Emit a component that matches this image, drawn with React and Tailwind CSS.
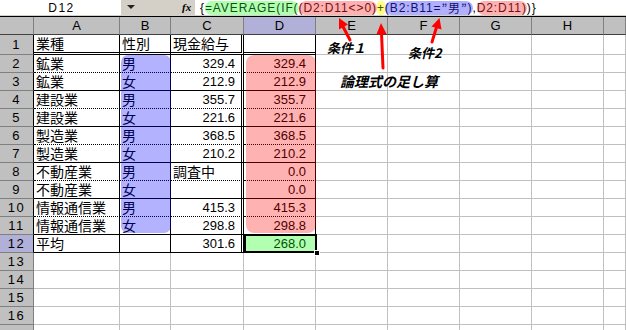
import React from "react";

const COLS = ["A", "B", "C", "D", "E", "F", "G", "H", ""];

// 表のデータ (A〜D列, 1〜12行)
const TABLE = [
  ["業種", "性別", "現金給与", ""],
  ["鉱業", "男", "329.4", "329.4"],
  ["鉱業", "女", "212.9", "212.9"],
  ["建設業", "男", "355.7", "355.7"],
  ["建設業", "女", "221.6", "221.6"],
  ["製造業", "男", "368.5", "368.5"],
  ["製造業", "女", "210.2", "210.2"],
  ["不動産業", "男", "調査中", "0.0"],
  ["不動産業", "女", "", "0.0"],
  ["情報通信業", "男", "415.3", "415.3"],
  ["情報通信業", "女", "298.8", "298.8"],
  ["平均", "", "301.6", "268.0"],
];

const isNum = (v) => /^[0-9.]+$/.test(v);

function rightBorder(r, c) {
  if (r > 12 || c > 3) return "border-r border-r-[#c0c0c0]";
  if (c === 2) return "border-r-[3px] border-r-black [border-right-style:double]";
  return "border-r border-r-black";
}

function bottomBorder(r, c) {
  if (r > 12 || c > 3) return "border-b border-b-[#c0c0c0]";
  if (r === 1) return "border-b-[3px] border-b-black [border-bottom-style:double]";
  if (r === 12) return "border-b border-b-black";
  if (r % 2 === 0) return "border-b border-b-black [border-bottom-style:dotted]";
  return "border-b border-b-black";
}

function Cell({ r, c }) {
  const v = r <= 12 && c <= 3 ? TABLE[r - 1][c] : "";
  const num = isNum(v);
  const pad = c === 3 ? "pr-[9px]" : "pr-[6px]";
  return (
    <div
      className={`flex items-center overflow-hidden whitespace-nowrap ${rightBorder(r, c)} ${bottomBorder(r, c)} ${
        num ? `justify-end text-[13px] ${pad}` : "justify-start pl-[2px] text-[14px]"
      }`}
    >
      {v}
    </div>
  );
}

function FormulaBar() {
  return (
    <div className="flex h-[15px] text-black">
      <div className="w-[121px] bg-white flex items-center justify-center text-[12px] tracking-[1.5px] pl-[2px]">
        D12
      </div>
      <div className="w-[74px] bg-[#d4d0c8] flex items-center relative">
        <svg width="8" height="5" viewBox="0 0 8 5" className="ml-[6px]">
          <polygon points="0,0 8,0 4,4" fill="#222" />
        </svg>
        <span className="absolute left-[61px] top-[0px] text-[11px] italic font-bold font-['Liberation_Serif',serif] leading-[14px]">
          fx
        </span>
      </div>
      <div className="flex-1 bg-white flex items-center pl-[5px] text-[12px] tracking-[0.9px] leading-[14px] whitespace-nowrap overflow-hidden">
        <span>{"{"}</span>
        <span className="rounded-full bg-[#b0ffb0] text-[#105010]">=AVERAGE(IF(</span>
        <span className="rounded-full bg-[#ffb0b0] text-[#701010]">(D2:D11&lt;&gt;0)</span>
        <span className="rounded-full bg-[#ffff80] text-[#505000]">+</span>
        <span className="rounded-full bg-[#b0b0ff] text-[#101070] flex items-center">
          (B2:B11=<span className="font-['Noto_Sans_CJK_JP',sans-serif] leading-[13px] text-[12px]">”男”</span>)
        </span>
        <span>,</span>
        <span className="rounded-full bg-[#ffb0b0] text-[#701010]">D2:D11)</span>
        <span>{")}"}</span>
      </div>
    </div>
  );
}

export default function App() {
  const rows = Array.from({ length: 17 }, (_, i) => i + 1);

  return (
    <div className="relative w-[626px] h-[330px] overflow-hidden bg-white font-['Liberation_Sans','Noto_Sans_CJK_JP',sans-serif] text-black">
      <FormulaBar />
      <div className="h-[1px] bg-[#d4d0c8]" />
      <div className="h-[1px] bg-black" />

      {/* Sheet grid */}
      <div className="grid grid-cols-[34px_86px_51px_73px_72px_72px_72px_72px_72px_1fr] grid-rows-[18px_20px_repeat(16,18px)] leading-none">
        {/* column headers */}
        <div className="bg-[#c0c0c0] border-r border-r-[#808080] border-b border-b-[#404040]" />
        {COLS.map((col, i) => (
          <div
            key={"h" + i}
            className={`flex items-center justify-center text-[13px] border-r border-r-[#808080] border-b border-b-[#404040] ${
              col === "D" ? "bg-[#b0b0d8]" : "bg-[#c0c0c0]"
            }`}
          >
            {col}
          </div>
        ))}

        {rows.map((r) => (
          <React.Fragment key={r}>
            <div
              className={`flex items-center justify-center text-[13px] tracking-[1.5px] border-b border-b-[#808080] ${
                r <= 12 ? "border-r border-r-black" : "border-r border-r-[#808080]"
              } ${r === 12 ? "bg-[#b0b0d8]" : "bg-[#c0c0c0]"}`}
            >
              {r < 17 ? r : ""}
            </div>
            {COLS.map((_, c) => (
              <Cell key={c} r={r} c={c} />
            ))}
          </React.Fragment>
        ))}
      </div>

      {/* range highlights */}
      <div className="absolute left-[121px] top-[55px] w-[50px] h-[178px] rounded-[7px] bg-[rgba(0,0,255,0.3)]" />
      <div className="absolute left-[246px] top-[55px] w-[70px] h-[178px] rounded-[8px] bg-[rgba(255,0,0,0.3)]" />

      {/* selected cell D12 */}
      <div className="absolute left-[244px] top-[234px] w-[73px] h-[19px] border-2 border-black bg-[rgba(0,255,0,0.3)]" />
      <div className="absolute left-[314px] top-[250px] w-[6px] h-[6px] bg-black border border-white" />

      {/* annotations */}
      <svg className="absolute left-0 top-0" width="626" height="330">
        <g stroke="#ff0000" strokeWidth="3" strokeLinecap="round">
          <line x1="350" y1="40" x2="343.2" y2="27" />
          <line x1="383" y1="68" x2="381.5" y2="33" />
          <line x1="432" y1="42" x2="436.4" y2="27.6" />
        </g>
        <g fill="#ff0000">
          <polygon points="339,18 348,24.5 339,29.5" />
          <polygon points="381,23 386.5,34 376.5,34.3" />
          <polygon points="439.5,18 441.5,29.5 431.5,26.5" />
        </g>
      </svg>
      <div className="absolute left-[327px] top-[40px] text-[13px] font-bold italic leading-[16px] font-['Noto_Sans_CJK_JP',sans-serif]">
        条件１
      </div>
      <div className="absolute left-[408px] top-[45px] text-[13px] font-bold italic leading-[16px] font-['Noto_Sans_CJK_JP',sans-serif]">
        条件2
      </div>
      <div className="absolute left-[340px] top-[73px] text-[14px] font-bold italic leading-[16px] font-['Noto_Sans_CJK_JP',sans-serif]">
        論理式の足し算
      </div>
    </div>
  );
}
